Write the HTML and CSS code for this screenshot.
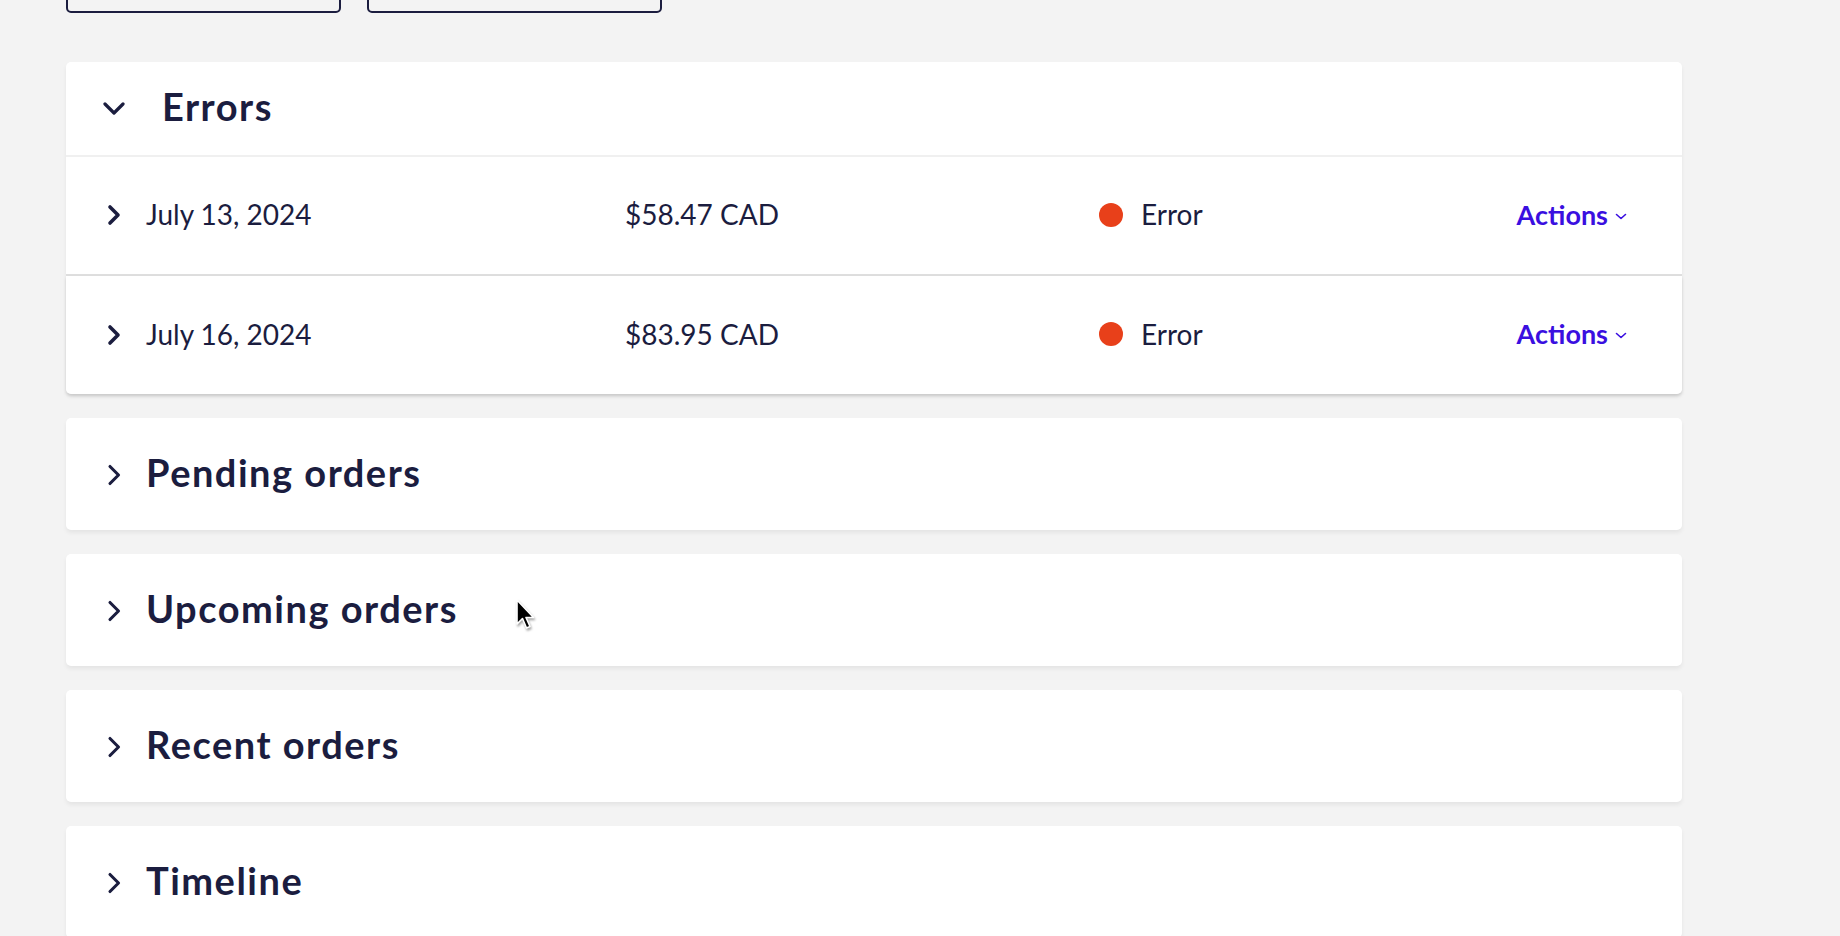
FILE: index.html
```html
<!DOCTYPE html>
<html lang="en">
<head>
<meta charset="utf-8">
<title>Orders</title>
<link rel="stylesheet" href="styles.css">
</head>
<body>
<main class="page">
  <div class="toolbar">
    <button class="tool-btn tool-btn--a" type="button"></button>
    <button class="tool-btn tool-btn--b" type="button"></button>
  </div>

  <section class="group group--open">
    <header class="group-head group-head--open">
      <svg class="chev-down" viewBox="0 0 22 13" width="22" height="13"><path d="M2 2 L11 11 L20 2" fill="none" stroke="currentColor" stroke-width="3.2" stroke-linecap="round" stroke-linejoin="round"/></svg>
      <h2 class="group-title">Errors</h2>
    </header>
    <div class="order-row">
      <div class="cell cell-date">
        <svg class="chev-row" viewBox="0 0 15 22" width="15" height="22"><path d="M3 3 L11 11 L3 19" fill="none" stroke="currentColor" stroke-width="3.6" stroke-linecap="round" stroke-linejoin="round"/></svg>
        <span>July 13, 2024</span>
      </div>
      <div class="cell cell-amount">$58.47 CAD</div>
      <div class="cell cell-status"><span class="dot"></span><span>Error</span></div>
      <div class="cell cell-actions"><span>Actions</span>
        <svg class="chev-small" viewBox="0 0 12 7" width="12" height="7"><path d="M1.5 1.5 L6 5.5 L10.5 1.5" fill="none" stroke="currentColor" stroke-width="1.6" stroke-linecap="round" stroke-linejoin="round"/></svg>
      </div>
    </div>
    <div class="order-row order-row--last">
      <div class="cell cell-date">
        <svg class="chev-row" viewBox="0 0 15 22" width="15" height="22"><path d="M3 3 L11 11 L3 19" fill="none" stroke="currentColor" stroke-width="3.6" stroke-linecap="round" stroke-linejoin="round"/></svg>
        <span>July 16, 2024</span>
      </div>
      <div class="cell cell-amount">$83.95 CAD</div>
      <div class="cell cell-status"><span class="dot"></span><span>Error</span></div>
      <div class="cell cell-actions"><span>Actions</span>
        <svg class="chev-small" viewBox="0 0 12 7" width="12" height="7"><path d="M1.5 1.5 L6 5.5 L10.5 1.5" fill="none" stroke="currentColor" stroke-width="1.6" stroke-linecap="round" stroke-linejoin="round"/></svg>
      </div>
    </div>
  </section>

  <section class="group">
    <header class="group-head">
      <svg class="chev-right" viewBox="0 0 15 22" width="15" height="22"><path d="M3 2.5 L11.5 11 L3 19.5" fill="none" stroke="currentColor" stroke-width="3.1" stroke-linecap="round" stroke-linejoin="round"/></svg>
      <h2 class="group-title">Pending orders</h2>
    </header>
  </section>

  <section class="group">
    <header class="group-head">
      <svg class="chev-right" viewBox="0 0 15 22" width="15" height="22"><path d="M3 2.5 L11.5 11 L3 19.5" fill="none" stroke="currentColor" stroke-width="3.1" stroke-linecap="round" stroke-linejoin="round"/></svg>
      <h2 class="group-title">Upcoming orders</h2>
    </header>
  </section>

  <section class="group">
    <header class="group-head">
      <svg class="chev-right" viewBox="0 0 15 22" width="15" height="22"><path d="M3 2.5 L11.5 11 L3 19.5" fill="none" stroke="currentColor" stroke-width="3.1" stroke-linecap="round" stroke-linejoin="round"/></svg>
      <h2 class="group-title">Recent orders</h2>
    </header>
  </section>

  <section class="group">
    <header class="group-head">
      <svg class="chev-right" viewBox="0 0 15 22" width="15" height="22"><path d="M3 2.5 L11.5 11 L3 19.5" fill="none" stroke="currentColor" stroke-width="3.1" stroke-linecap="round" stroke-linejoin="round"/></svg>
      <h2 class="group-title">Timeline</h2>
    </header>
  </section>

  <svg class="cursor" viewBox="0 0 20 32" width="20" height="32">
    <path d="M2 1 L2 25 L7.5 19.5 L11.5 29 L15 27.5 L11 18.5 L18.5 18.5 Z" fill="#000" stroke="#fff" stroke-width="1.6" stroke-linejoin="round"/>
  </svg>
</main>
</body>
</html>
```

FILE: styles.css
```css
* { box-sizing: border-box; }

html, body {
  margin: 0;
  padding: 0;
  background: #f3f3f3;
}

body {
  font-family: Lato, "Liberation Sans", sans-serif;
  color: #1b1d3f;
  overflow: hidden;
  height: 936px;
}

.page {
  position: relative;
  width: 1616px;
  margin-left: 66px;
  display: flex;
  flex-direction: column;
  gap: 24px;
}

.toolbar {
  display: flex;
  gap: 26px;
  margin-top: -35px;
  margin-bottom: 25px;
}

.tool-btn {
  height: 48px;
  border: 2px solid #1b1d3f;
  border-radius: 5px;
  background: transparent;
  padding: 0;
}
.tool-btn--a { width: 275px; }
.tool-btn--b { width: 295px; }

.group {
  background: #fff;
  border-radius: 5px;
  box-shadow: 0 3px 4px rgba(0, 0, 0, 0.06);
}

.group-head {
  height: 112px;
  display: flex;
  align-items: center;
  padding-left: 41px;
  padding-bottom: 4px;
}

.group-head--open {
  height: 95px;
  padding-left: 37px;
  padding-bottom: 5px;
  border-bottom: 2px solid #f0f0f0;
}

.chev-right {
  display: block;
  margin-right: 24px;
  margin-top: 6px;
  flex: none;
}

.chev-down {
  display: block;
  margin-right: 37px;
  flex: none;
  margin-top: 4px;
}

.group-title {
  margin: 0;
  font-size: 38px;
  font-weight: 700;
  letter-spacing: 1.5px;
  line-height: 1;
}

.order-row {
  display: grid;
  grid-template-columns: 518px 474px 1fr auto;
  align-items: center;
  height: 119px;
  padding: 0 55px 3px 41px;
  background: #fff;
  font-size: 28px;
  border-bottom: 2px solid #dedede;
}
.order-row--last {
  height: 118px;
  border-bottom: 0;
  border-radius: 0 0 5px 5px;
  box-shadow: 0 2px 3px rgba(0, 0, 0, 0.12);
}

.cell {
  display: flex;
  align-items: center;
  white-space: nowrap;
}

.cell-date { gap: 24px; }
.chev-row { display: block; flex: none; margin-top: 2px; }

.cell-status { gap: 18px; }
.dot {
  width: 24px;
  height: 24px;
  border-radius: 50%;
  background: #e8401a;
  flex: none;
  margin-top: 1px;
}

.cell-actions {
  color: #3a0fe0;
  font-weight: 700;
  font-size: 27px;
  gap: 7px;
}
.chev-small { display: block; margin-top: 4px; }

.cursor {
  position: absolute;
  left: 449px;
  top: 599px;
  filter: drop-shadow(1px 2px 1px rgba(0, 0, 0, 0.35));
}
```
